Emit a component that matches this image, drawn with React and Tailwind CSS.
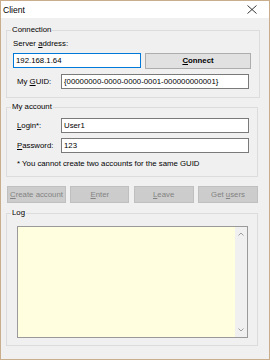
function U({ children }) {
  return <span className="underline underline-offset-[1px]">{children}</span>;
}

function Field({ value, className = "", focused = false }) {
  return (
    <div
      className={`h-[15px] border bg-white flex items-center pl-[2px] ${
        focused ? "border-[#0078d7]" : "border-[#7a7a7a]"
      } ${className}`}
    >
      {value}
    </div>
  );
}

function DisabledButton({ children, className = "" }) {
  return (
    <div
      className={`h-[17px] border border-[#bfbfbf] bg-[#cccccc] text-[#838383] flex items-center justify-center ${className}`}
    >
      {children}
    </div>
  );
}

function Group({ title, children, className = "" }) {
  return (
    <fieldset className={`border border-[#dcdcdc] pl-[4px] pr-[8px] ${className}`}>
      <legend className="px-[1px] leading-[10px]">{title}</legend>
      {children}
    </fieldset>
  );
}

export default function App() {
  return (
    <div className="w-[270px] h-[360px] border border-[#c9ad8c] bg-[#f0f0f0] flex flex-col font-['Liberation_Sans',Arial,sans-serif] text-[7.8px] leading-[10px] text-black">
      {/* Title bar */}
      <div className="h-[17px] shrink-0 bg-white flex items-center justify-between pl-[2px] pr-[12px]">
        <span className="text-[8.6px]">Client</span>
        <svg width="10" height="9" viewBox="0 0 10 9">
          <path d="M0.5 0.5 L9.5 8.5 M9.5 0.5 L0.5 8.5" stroke="#222" strokeWidth="0.9" fill="none" />
        </svg>
      </div>

      <div className="pl-[5px] pr-[11px] pt-[7px] flex flex-col">
        {/* Connection */}
        <Group title="Connection" className="pb-[8px]">
          <div className="pl-[2px] mt-[4px]">
            Server <U>a</U>ddress:
          </div>
          <div className="flex mt-[4px] pl-[2px] gap-[4px]">
            <Field value="192.168.1.64" focused className="w-[128px]" />
            <div className="w-[106px] h-[16px] border border-[#adadad] bg-[#e1e1e1] flex items-center justify-center font-bold">
              <span>
                <U>C</U>onnect
              </span>
            </div>
          </div>
          <div className="flex items-center mt-[5px] pl-[6px]">
            <span className="w-[44px]">
              My <U>G</U>UID:
            </span>
            <Field value="{00000000-0000-0000-0001-000000000001}" className="w-[188px]" />
          </div>
        </Group>

        {/* My account */}
        <Group title="My account" className="mt-[4px] pb-[7px]">
          <div className="flex items-center mt-[6px] pl-[6px]">
            <span className="w-[44px]">
              <U>L</U>ogin*:
            </span>
            <Field value="User1" className="w-[188px]" />
          </div>
          <div className="flex items-center mt-[5px] pl-[6px]">
            <span className="w-[44px]">
              <U>P</U>assword:
            </span>
            <Field value="123" className="w-[188px]" />
          </div>
          <div className="mt-[6px] pl-[6px]">* You cannot create two accounts for the same GUID</div>
        </Group>

        {/* Buttons */}
        <div className="flex justify-between mt-[9px] pl-[1px]">
          <DisabledButton className="w-[59px]">
            <span>
              <U>C</U>reate account
            </span>
          </DisabledButton>
          <DisabledButton className="w-[59px]">
            <span>
              <U>E</U>nter
            </span>
          </DisabledButton>
          <DisabledButton className="w-[60px]">
            <span>
              <U>L</U>eave
            </span>
          </DisabledButton>
          <DisabledButton className="w-[60px]">
            <span>
              Get <U>u</U>sers
            </span>
          </DisabledButton>
        </div>

        {/* Log */}
        <Group title="Log" className="mt-[5px] pb-[7px]">
          <div className="ml-[6px] mt-[8px] w-[231px] h-[112px] border border-[#9a9a9a] flex">
            <div className="flex-1 bg-[#ffffe0]" />
            <div className="w-[12px] bg-[#f0f0f0] flex flex-col items-center justify-between py-[5px]">
              <svg width="6" height="4" viewBox="0 0 6 4">
                <path d="M0.5 3.5 L3 1 L5.5 3.5" stroke="#a0a0a0" strokeWidth="1" fill="none" />
              </svg>
              <svg width="6" height="4" viewBox="0 0 6 4">
                <path d="M0.5 0.5 L3 3 L5.5 0.5" stroke="#a0a0a0" strokeWidth="1" fill="none" />
              </svg>
            </div>
          </div>
        </Group>
      </div>
    </div>
  );
}
